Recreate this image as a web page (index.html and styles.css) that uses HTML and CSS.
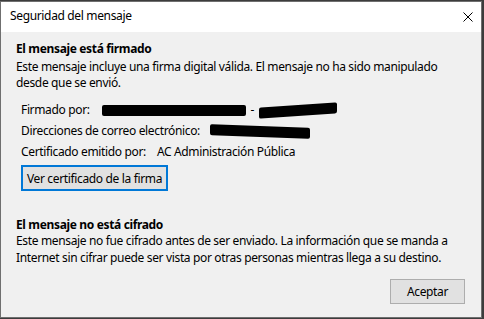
FILE: index.html
```html
<!DOCTYPE html>
<html lang="es">
<head>
  <meta charset="UTF-8">
  <title>Seguridad del mensaje</title>
  <link rel="stylesheet" href="styles.css">
</head>
<body>
  <div class="window">
    <!-- Title bar -->
    <div class="titlebar">
      <span class="title">Seguridad del mensaje</span>
      <svg class="close" width="10" height="10" viewBox="0 0 10 10">
        <path d="M0.5 0.5 L9.5 9.5 M9.5 0.5 L0.5 9.5" stroke="#000" stroke-width="1" fill="none"/>
      </svg>
    </div>

    <div class="content">
      <!-- Signature -->
      <div class="section">
        <h3>El mensaje está firmado</h3>
        <p class="first-p">Este mensaje incluye una firma digital válida. El mensaje no ha sido manipulado desde que se envió.</p>
        <div class="details">
          <div class="row">
            <span class="label">Firmado por:</span>
            <span class="redact r1"></span>
            <span class="dash">-</span>
            <span class="redact r2"></span>
          </div>
          <div class="row">
            <span class="label">Direcciones de correo electrónico:</span>
            <span class="redact r3"></span>
          </div>
          <div class="row">
            <span class="label">Certificado emitido por:</span>
            <span class="issuer">AC Administración Pública</span>
          </div>
        </div>
        <button class="btn btn-focus">Ver certificado de la firma</button>
      </div>

      <!-- Encryption -->
      <div class="section second">
        <h3>El mensaje no está cifrado</h3>
        <p>Este mensaje no fue cifrado antes de ser enviado. La información que se manda a Internet sin cifrar puede ser vista por otras personas mientras llega a su destino.</p>
      </div>

      <div class="footer">
        <button class="btn btn-ok">Aceptar</button>
      </div>
    </div>
  </div>
</body>
</html>
```

FILE: styles.css
```css
/* Page */
body {
  margin: 0;
  background: #3c3c3c;
  font-family: 'Noto Sans', sans-serif;
  font-size: 12px;
  letter-spacing: -0.35px;
  color: #000;
}

/* Dialog window */
.window {
  margin: 1px 0 0 0;
  width: 480px;
  height: 315px;
  border: 1px solid #6f6f6f;
  background: #f0f0f0;
  display: flex;
  flex-direction: column;
}

.titlebar {
  height: 30px;
  box-sizing: border-box;
  padding: 0 8px 2px 9px;
  line-height: 16px;
  background: #fff;
  display: flex;
  align-items: center;
  justify-content: space-between;
}

.close {
  display: block;
  margin-top: 1px;
}

.content {
  flex: 1;
  padding: 9px 16px 0 15px;
  display: flex;
  flex-direction: column;
}

h3 {
  margin: 0;
  font-size: 12px;
  font-weight: bold;
  line-height: 16px;
}

p {
  margin: 0;
  line-height: 17px;
}

.first-p {
  margin-top: 2px;
  line-height: 16px;
}

/* Signer details */
.details {
  margin: 11px 0 0 5px;
  display: flex;
  flex-direction: column;
  gap: 5px;
}

.row {
  display: flex;
  align-items: center;
  line-height: 16px;
}

.redact {
  display: inline-block;
  height: 11px;
  background: #000;
  border-radius: 2px;
}

.r1 {
  width: 144px;
  margin-left: 12px;
}

.dash {
  margin: 0 5px;
}

.r2 {
  width: 78px;
  transform: skewY(-4deg);
}

.r3 {
  width: 100px;
  margin-left: 10px;
  transform: skewY(2deg);
}

.issuer {
  margin-left: 11px;
}

/* Buttons */
.btn {
  font-family: inherit;
  font-size: 12px;
  letter-spacing: inherit;
  color: #000;
  background: #e1e1e1;
  border: 1px solid #adadad;
  padding: 0;
  margin: 0;
}

.btn-focus {
  align-self: flex-start;
  margin: 5px 0 0 5px;
  width: 147px;
  height: 26px;
  border: 2px solid #0078d7;
}

.section {
  display: flex;
  flex-direction: column;
}

.second {
  margin-top: 27px;
}

.second h3 {
  line-height: 14px;
}

.footer {
  margin-top: auto;
  margin-bottom: 13px;
  display: flex;
  justify-content: flex-end;
}

.btn-ok {
  width: 75px;
  height: 25px;
}
```
